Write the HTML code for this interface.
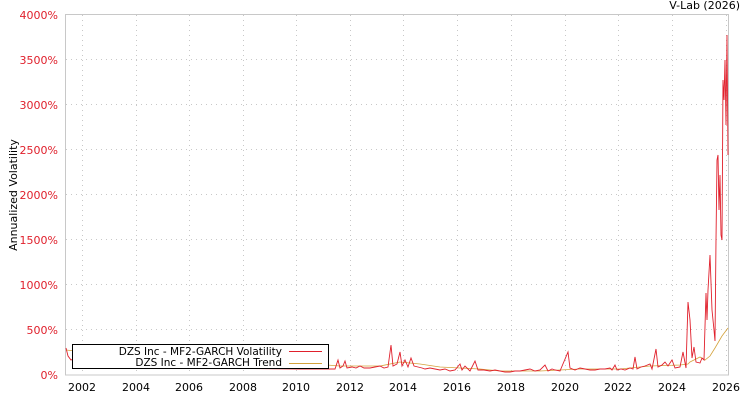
<!DOCTYPE html>
<html><head><meta charset="utf-8"><style>
body{margin:0;background:#fff;width:750px;height:400px;overflow:hidden;font-family:"DejaVu Sans","Liberation Sans",sans-serif}
svg text{font-family:"DejaVu Sans","Liberation Sans",sans-serif;font-size:11px}
</style></head><body>
<svg width="750" height="400" xmlns="http://www.w3.org/2000/svg">
<rect x="65.5" y="14.5" width="663" height="360.5" fill="#fff" stroke="#c8c8c8"/>
<g stroke="#c8c8c8" stroke-dasharray="1,4" stroke-width="1">
<line x1="66" x2="728" y1="59.5" y2="59.5"/><line x1="66" x2="728" y1="104.5" y2="104.5"/>
<line x1="66" x2="728" y1="149.5" y2="149.5"/><line x1="66" x2="728" y1="194.5" y2="194.5"/>
<line x1="66" x2="728" y1="239.5" y2="239.5"/><line x1="66" x2="728" y1="284.5" y2="284.5"/>
<line x1="66" x2="728" y1="329.5" y2="329.5"/>
<line y1="15" y2="375" x1="82.5" x2="82.5"/><line y1="15" y2="375" x1="136.5" x2="136.5"/>
<line y1="15" y2="375" x1="189.5" x2="189.5"/><line y1="15" y2="375" x1="243.5" x2="243.5"/>
<line y1="15" y2="375" x1="296.5" x2="296.5"/><line y1="15" y2="375" x1="350.5" x2="350.5"/>
<line y1="15" y2="375" x1="403.5" x2="403.5"/><line y1="15" y2="375" x1="457.5" x2="457.5"/>
<line y1="15" y2="375" x1="511.5" x2="511.5"/><line y1="15" y2="375" x1="565.5" x2="565.5"/>
<line y1="15" y2="375" x1="618.5" x2="618.5"/><line y1="15" y2="375" x1="672.5" x2="672.5"/>
<line y1="15" y2="375" x1="726.5" x2="726.5"/>
</g>
<g fill="#e0202c" text-anchor="end">
<text x="58" y="19">4000%</text><text x="58" y="64">3500%</text><text x="58" y="109">3000%</text>
<text x="58" y="154">2500%</text><text x="58" y="199">2000%</text><text x="58" y="244">1500%</text>
<text x="58" y="289">1000%</text><text x="58" y="334">500%</text><text x="58" y="379">0%</text>
</g>
<g fill="#000" text-anchor="middle">
<text x="82" y="391">2002</text><text x="136" y="391">2004</text><text x="189" y="391">2006</text>
<text x="243" y="391">2008</text><text x="296" y="391">2010</text><text x="350" y="391">2012</text>
<text x="403" y="391">2014</text><text x="457" y="391">2016</text><text x="511" y="391">2018</text>
<text x="565" y="391">2020</text><text x="618" y="391">2022</text><text x="672" y="391">2024</text>
<text x="726" y="391">2026</text>
</g>
<text x="740" y="9" text-anchor="end" fill="#000">V-Lab (2026)</text>
<text transform="translate(17,195) rotate(-90)" text-anchor="middle" fill="#000">Annualized Volatility</text>
<polyline fill="none" stroke="#d4a23c" stroke-width="0.8" points="66,350 75,351 100,357 200,360 300,363 340,366 380,366 400,362 420,364 440,367 480,369 500,371 540,371 580,369 620,369 650,366 680,365 688,364 690,362 700,357 705,360 710,356 715,348 722,336 728,328"/>
<polyline fill="none" stroke="#e0202c" stroke-width="0.9" points="66,348 68,356 71,360 75,358 80,361 90,365 200,368 300,369 335,369 338,360 340,368 343,366 345,361 347,368 352,367 356,368 360,366 364,368 370,368 375,367 380,366 384,368 388,367 391,345 393,366 397,364 400,352 402,366 405,360 408,367 411,358 414,366 418,367 422,368 425,369 430,368 435,369 440,370 445,369 450,371 455,370 460,364 462,370 465,366 470,371 475,361 478,370 484,370 490,371 495,370 500,371 505,372 510,372 515,371 520,371 525,370 530,369 535,371 540,370 545,365 548,371 552,369 555,370 560,371 568,352 570,368 575,370 580,368 585,369 590,370 595,370 600,369 605,369 610,368 612,370 615,365 617,370 621,369 625,370 630,368 633,369 635,357 637,369 641,367 645,366 650,364 652,369 656,349 658,367 662,365 665,362 668,366 672,360 675,368 680,367 683,352 686,368 688,302 690,320 692,358 694,347 696,362 700,363 702,358 704,360 706,293 707,320 708,290 710,255 712,310 714,330 715,341 716,240 717,160 718,155 719,210 720,175 721,235 722,240 723,80 724,100 725,60 726,125 727,35 728,155"/>
<rect x="72.5" y="344.5" width="256" height="24" fill="#fff" stroke="#000"/>
<text x="282" y="355" text-anchor="end" fill="#000" style="font-size:10.5px">DZS Inc - MF2-GARCH Volatility</text>
<text x="282" y="366" text-anchor="end" fill="#000" style="font-size:10.5px">DZS Inc - MF2-GARCH Trend</text>
<line x1="289" x2="322" y1="351.5" y2="351.5" stroke="#e0202c"/>
<line x1="289" x2="322" y1="363.5" y2="363.5" stroke="#d4a23c"/>
</svg>
</body></html>
